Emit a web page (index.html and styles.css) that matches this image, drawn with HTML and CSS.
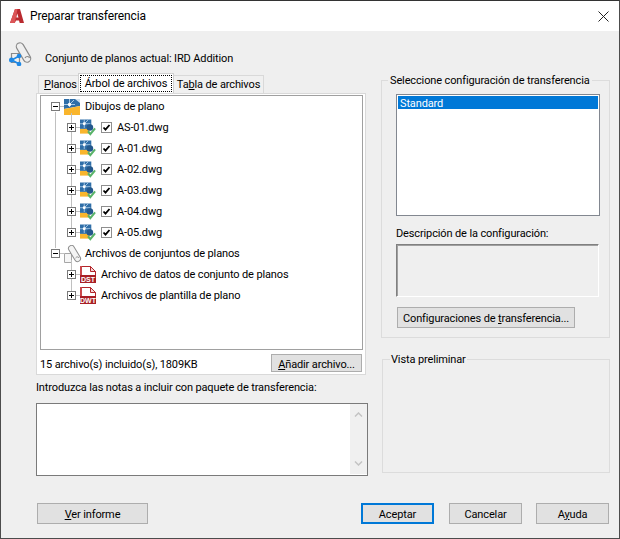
FILE: index.html
```html
<!DOCTYPE html>
<html lang="es">
<head>
<meta charset="utf-8">
<title>Preparar transferencia</title>
<link rel="stylesheet" href="styles.css">
</head>
<body>
<svg class="defs" width="0" height="0" aria-hidden="true">
  <symbol id="sheet" viewBox="0 0 16 16">
    <path d="M0 0h16v7L0 10z" fill="#2f6ea8"/>
    <path d="M0 10l16-3v9H0z" fill="#f9b52c"/>
    <path d="M0 5.500h11M5.500 0v8M5.500 5.500L10 1" stroke="#a9c9e4" stroke-width="1" fill="none"/>
    <circle cx="5.500" cy="5.500" r="1.700" fill="#fff"/>
    <path d="M11 0h5v4z" fill="#cfe0ef"/>
  </symbol>
  <symbol id="dwg" viewBox="0 0 17 17">
    <path d="M0 0h12v10H0z" fill="#2f6ea8"/>
    <path d="M0 10h10v5H0z" fill="#f9b52c"/>
    <path d="M0 4.500h11M4.500 0v9M4.500 4.500L9 0" stroke="#a9c9e4" stroke-width="1" fill="none"/>
    <circle cx="4.500" cy="4.500" r="1.500" fill="#fff"/>
    <circle cx="10.500" cy="8.500" r="3.500" fill="#24588c"/>
    <path d="M8.500 12.500l2.500 3 5-6" stroke="#58b368" stroke-width="2.200" fill="none"/>
  </symbol>
  <symbol id="roll" viewBox="0 0 18 18">
    <path d="M.5 8.500h7v9h-7z" fill="#f6f6f6" stroke="#a6a6a6"/>
    <path d="M7.500 3.500l6 10" stroke="#8f8f8f" stroke-width="7" stroke-linecap="round" fill="none"/>
    <path d="M7.500 3.500l6 10" stroke="#f4f4f4" stroke-width="5" stroke-linecap="round" fill="none"/>
    <path d="M11.500 13c1-1.500 3-1.500 3.500 0" stroke="#8f8f8f" stroke-width="1" fill="none"/>
  </symbol>
  <symbol id="tick" viewBox="0 0 11 11">
    <rect x=".5" y=".5" width="10" height="10" fill="#fff" stroke="#8e8e8e"/>
    <path d="M2.500 5.500l2 2.200 4-4.700" stroke="#000" stroke-width="1.800" fill="none"/>
  </symbol>
</svg>
<div class="window">
  <header class="titlebar">
    <svg class="app-logo" viewBox="0 0 14 14" width="14" height="14">
      <path d="M5 0h5l4 14H9.700L9 11.500H6L4.800 14H0z" fill="#b92a2f"/>
      <path d="M5 0h2.500L4.800 14H0z" fill="#dc5557"/>
      <path d="M7.200 4.500L6.300 8.500h2.200z" fill="#fff"/>
    </svg>
    <span class="title">Preparar transferencia</span>
    <svg class="close" viewBox="0 0 11 11" width="11" height="11">
      <path d="M.5.500l10 10M10.500.500l-10 10" stroke="#222" stroke-width="1" fill="none"/>
    </svg>
  </header>

  <div class="current">
    <svg class="set-icon" viewBox="0 0 24 24" width="24" height="24">
      <path d="M3.500 11.500h8v9h-8z" fill="none" stroke="#8a8a8a" stroke-width="1.200"/>
      <path d="M12 4.500l7 12" stroke="#8a8a8a" stroke-width="8.500" stroke-linecap="round" fill="none"/>
      <path d="M12 4.500l7 12" stroke="#efefef" stroke-width="6.200" stroke-linecap="round" fill="none"/>
      <path d="M17 16c1-2 4-2 4.500 0" stroke="#8a8a8a" stroke-width="1.200" fill="none"/>
      <path d="M4 18l7-4M4 18l7 4" stroke="#1e88e5" stroke-width="1.500"/>
      <circle cx="3.500" cy="18" r="2.500" fill="#1e88e5"/>
      <circle cx="11" cy="14" r="2.300" fill="#1e88e5"/>
      <circle cx="11" cy="22" r="2.300" fill="#1e88e5"/>
    </svg>
    <span>Conjunto de planos actual: IRD Addition</span>
  </div>

  <main class="columns">
    <section class="left">
      <div class="tabs">
        <div class="tab tab-first"><u>P</u>lanos</div>
        <div class="tab tab-active"><span class="focus">Árbol de archivos</span></div>
        <div class="tab tab-last">Ta<u>b</u>la de archivos</div>
      </div>
      <div class="panel">
        <div class="tree">
          <div class="branch">
            <div class="row">
              <span class="toggle toggle-open"></span>
              <svg class="icon-root"><use href="#sheet"/></svg>
              <span>Dibujos de plano</span>
            </div>
            <div class="children">
              <div class="row child"><span class="toggle"></span><svg class="icon-file"><use href="#dwg"/></svg><svg class="check"><use href="#tick"/></svg><span>AS-01.dwg</span></div>
              <div class="row child"><span class="toggle"></span><svg class="icon-file"><use href="#dwg"/></svg><svg class="check"><use href="#tick"/></svg><span>A-01.dwg</span></div>
              <div class="row child"><span class="toggle"></span><svg class="icon-file"><use href="#dwg"/></svg><svg class="check"><use href="#tick"/></svg><span>A-02.dwg</span></div>
              <div class="row child"><span class="toggle"></span><svg class="icon-file"><use href="#dwg"/></svg><svg class="check"><use href="#tick"/></svg><span>A-03.dwg</span></div>
              <div class="row child"><span class="toggle"></span><svg class="icon-file"><use href="#dwg"/></svg><svg class="check"><use href="#tick"/></svg><span>A-04.dwg</span></div>
              <div class="row child"><span class="toggle"></span><svg class="icon-file"><use href="#dwg"/></svg><svg class="check"><use href="#tick"/></svg><span>A-05.dwg</span></div>
            </div>
          </div>
          <div class="branch">
            <div class="row">
              <span class="toggle toggle-open"></span>
              <svg class="icon-roll"><use href="#roll"/></svg>
              <span>Archivos de conjuntos de planos</span>
            </div>
            <div class="children">
              <div class="row child">
                <span class="toggle"></span>
                <svg class="icon-file" viewBox="0 0 16 17"><path d="M.5.500h10l5 5v11H.500z" fill="#fff" stroke="#b3262b"/><path d="M10.500.500v5h5z" fill="#f3d5d5" stroke="#b3262b"/><path d="M0 0h2v9H0z" fill="#c9474b"/><rect y="9" width="16" height="8" fill="#a81f26"/><text class="badge" x="8" y="15.800">DST</text></svg>
                <span>Archivo de datos de conjunto de planos</span>
              </div>
              <div class="row child">
                <span class="toggle"></span>
                <svg class="icon-file" viewBox="0 0 16 17"><path d="M.5.500h10l5 5v11H.500z" fill="#fff" stroke="#b3262b"/><path d="M10.500.500v5h5z" fill="#f3d5d5" stroke="#b3262b"/><path d="M0 0h2v9H0z" fill="#c9474b"/><rect y="9" width="16" height="8" fill="#a81f26"/><text class="badge" x="8" y="15.800">DWT</text></svg>
                <span>Archivos de plantilla de plano</span>
              </div>
            </div>
          </div>
        </div>
        <div class="status">
          <span class="status-text">15 archivo(s) incluido(s), 1809KB</span>
          <button class="btn btn-add" type="button"><u>A</u>ñadir archivo...</button>
        </div>
      </div>
      <label class="notes-label">Introduzca las notas a incluir con paquete de transferencia:</label>
      <div class="notes">
        <div class="scrollbar">
          <svg viewBox="0 0 9 5" width="9" height="5"><path d="M1 4.500l3.500-3.500 3.500 3.500" stroke="#c4c4c4" stroke-width="1.500" fill="none"/></svg>
          <svg viewBox="0 0 9 5" width="9" height="5"><path d="M1 .5l3.500 3.500 3.500-3.500" stroke="#c4c4c4" stroke-width="1.500" fill="none"/></svg>
        </div>
      </div>
    </section>

    <aside class="right">
      <fieldset class="group group-config">
        <legend>Seleccione configuración de transferencia</legend>
        <div class="listbox"><div class="selected">Standard</div></div>
        <div class="desc-label">Descripción de la configuración:</div>
        <div class="desc-box"></div>
        <button class="btn btn-config" type="button">Configuraciones de <u>t</u>ransferencia...</button>
      </fieldset>
      <fieldset class="group group-preview">
        <legend>Vista preliminar</legend>
      </fieldset>
    </aside>
  </main>

  <footer class="footer">
    <button class="btn btn-report" type="button"><u>V</u>er informe</button>
    <button class="btn btn-primary" type="button">Aceptar</button>
    <button class="btn btn-action" type="button">Cancelar</button>
    <button class="btn btn-action" type="button">A<u>y</u>uda</button>
  </footer>
</div>
</body>
</html>
```
FILE: styles.css
```css
* { box-sizing: border-box; }
html, body { margin: 0; padding: 0; }
body {
  width: 620px;
  height: 539px;
  overflow: hidden;
  font-family: Roboto, "Liberation Sans", sans-serif;
  font-size: 11px;
  letter-spacing: -0.13px;
  line-height: 16px;
  color: #000;
}
.defs { display: block; width: 0; height: 0; }
u { text-underline-offset: 1px; }

.window {
  width: 620px;
  height: 539px;
  background: #efefef;
  border: 1px solid #4c4c4c;
  border-top-color: #333;
  display: flex;
  flex-direction: column;
}

.titlebar {
  height: 30px;
  background: #fff;
  display: flex;
  align-items: center;
  padding: 0 10px 0 9px;
  flex: none;
}
.app-logo { flex: none; }
.title { margin-left: 6px; font-size: 12px; flex: 1; }
.close { flex: none; }

.current {
  height: 42px;
  flex: none;
  display: flex;
  padding-left: 7px;
}
.set-icon { margin-top: 11px; flex: none; }
.current span { margin: 20px 0 0 13px; }

.columns { display: flex; flex: none; height: 403px; }
.left { width: 332px; margin-left: 35px; flex: none; }
.right { width: 229px; margin-left: 13px; flex: none; }

.tabs { display: flex; height: 20px; padding-left: 2px; align-items: flex-end; position: relative; z-index: 1; }
.tab {
  height: 18px;
  background: #f0f0f0;
  border: 1px solid #d9d9d9;
  border-bottom: 0;
  display: flex;
  align-items: center;
  justify-content: center;
  white-space: nowrap;
}
.tab-first { width: 40px; border-right: 0; padding-left: 4px; }
.tab-active { width: 96px; height: 20px; background: #fff; border-color: #d0d0d0; padding: 2px; }
.tab-last { width: 90px; border-left: 0; }
.focus { outline: 1px dotted #000; width: 100%; height: 100%; line-height: 15px; text-align: center; }

.panel {
  width: 330px;
  height: 282px;
  background: #fff;
  border: 1px solid #d9d9d9;
  padding: 1px 1px 0 3px;
}
.tree {
  height: 255px;
  width: 323px;
  border: 1px solid #a0a0a0;
  padding: 0 0 0 10px;
}

.branch { position: relative; }
.branch:first-child::before {
  content: "";
  position: absolute;
  left: 4px;
  top: 16px;
  height: 136px;
  width: 1px;
  background: #c0c0c0;
}
.children { position: relative; }
.children::before {
  content: "";
  position: absolute;
  left: 20px;
  top: -4px;
  bottom: 10px;
  width: 1px;
  background: #c0c0c0;
}
.row { height: 21px; display: flex; align-items: center; position: relative; white-space: nowrap; }
.child { padding-left: 16px; }
.toggle {
  width: 9px;
  height: 9px;
  flex: none;
  border: 1px solid #7a7a7a;
  background:
    linear-gradient(#000, #000) center / 5px 1px no-repeat,
    linear-gradient(#000, #000) center / 1px 5px no-repeat,
    #fff;
  position: relative;
  z-index: 1;
}
.toggle-open {
  background:
    linear-gradient(#000, #000) center / 5px 1px no-repeat,
    #fff;
}
.toggle::after {
  content: "";
  position: absolute;
  left: 100%;
  margin-left: 1px;
  top: 3px;
  width: 4px;
  height: 1px;
  background: #c0c0c0;
}
.icon-root { width: 16px; height: 16px; margin: 0 5px 0 4px; flex: none; }
.icon-roll { width: 18px; height: 18px; margin: 0 3px 0 4px; flex: none; }
.icon-file { width: 16px; height: 17px; margin: 0 5px 0 4px; flex: none; }
.check { width: 11px; height: 11px; flex: none; margin-right: 5px; }
.badge {
  font: 700 7px "Liberation Sans", sans-serif;
  letter-spacing: 0;
  fill: #fff;
  text-anchor: middle;
}

.status {
  display: flex;
  align-items: center;
  justify-content: space-between;
  height: 18px;
  margin-top: 4px;
  padding-right: 2px;
}
.status-text { padding-top: 3px; }

.btn {
  font: inherit;
  letter-spacing: inherit;
  color: #000;
  background: #e1e1e1;
  border: 1px solid #adadad;
  border-radius: 0;
  padding: 2px 0 0;
  height: 21px;
  flex: none;
  white-space: nowrap;
}
.btn-add { width: 91px; height: 18px; }

.notes-label { display: block; margin-top: 5px; height: 15px; }
.notes {
  width: 332px;
  height: 73px;
  margin-top: 8px;
  background: #fff;
  border: 1px solid #7a7a7a;
  display: flex;
  justify-content: flex-end;
  padding-bottom: 1px;
}
.scrollbar {
  width: 17px;
  background: #f0f0f0;
  display: flex;
  flex-direction: column;
  justify-content: space-between;
  align-items: center;
  padding: 8px 0;
}

.group {
  margin: 0;
  padding: 0;
  border: 1px solid #dcdcdc;
  min-width: 0;
}
.group legend { padding: 2px 2px 0; white-space: nowrap; line-height: 16px; }
.group-config { height: 267px; margin-top: -2px; padding-left: 14px; }
.group-config legend { margin-left: -8px; }
.group-preview { width: 228px; height: 123px; margin: 12px 0 0 1px; }
.group-preview legend { margin-left: 7px; padding: 2px 1px 0; }
.listbox {
  width: 204px;
  height: 122px;
  margin-top: 5px;
  background: #fff;
  border: 1px solid #828790;
  padding: 1px;
}
.selected { height: 13px; line-height: 15px; background: #0078d7; color: #fff; padding-left: 2px; }
.desc-label { margin-top: 10px; height: 15px; }
.desc-box {
  width: 203px;
  height: 53px;
  margin-top: 3px;
  border: 1px solid;
  border-color: #808080 #fff #fff #808080;
  box-shadow: inset 1px 1px 0 #a0a0a0;
}
.btn-config { width: 178px; margin: 10px 0 0 1px; display: block; }

.footer {
  display: flex;
  margin-top: 27px;
  padding: 0 10px 0 36px;
  flex: none;
}
.btn-report { width: 111px; margin-right: auto; }
.btn-primary { width: 73px; border: 2px solid #0078d7; margin-right: 15px; }
.btn-action { width: 73px; }
.btn-action + .btn-action { margin-left: 14px; }
```
